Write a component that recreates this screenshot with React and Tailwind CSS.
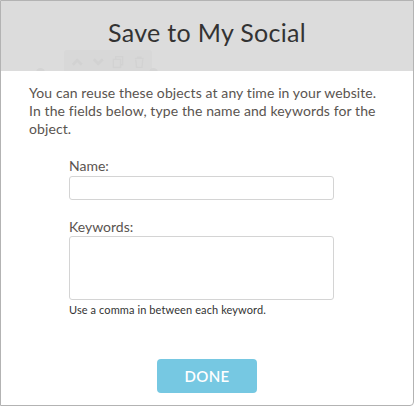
import React from "react";

function Toolbar() {
  return (
    <div className="absolute left-[63px] top-[49px] flex h-[24px] w-[88px] items-center gap-[8px] rounded-[3px] bg-[#d8d8d8] px-[7px]">
      <svg width="14" height="10" viewBox="0 0 14 10"><path d="M2 8 L7 3 L12 8" stroke="#d2d2d2" strokeWidth="3" fill="none" /></svg>
      <svg width="14" height="10" viewBox="0 0 14 10"><path d="M2 2 L7 7 L12 2" stroke="#d2d2d2" strokeWidth="3" fill="none" /></svg>
      <svg width="14" height="14" viewBox="0 0 14 14"><rect x="4" y="1" width="8" height="9" stroke="#d2d2d2" strokeWidth="1.5" fill="none" /><rect x="1.5" y="4" width="8" height="9" stroke="#d2d2d2" strokeWidth="1.5" fill="#d8d8d8" /></svg>
      <svg width="14" height="14" viewBox="0 0 14 14"><path d="M2 3 H12 M5 3 V1.5 H9 V3 M3 4 L4 13 H10 L11 4" stroke="#d2d2d2" strokeWidth="1.5" fill="none" /></svg>
    </div>
  );
}

export default function App() {
  return (
    <div className="relative flex h-[406px] w-[414px] flex-col overflow-hidden rounded-br-[4px] border border-[#b3b3b3] bg-white font-['Lato',sans-serif]">
      <div className="relative flex h-[70px] shrink-0 items-start justify-center overflow-hidden bg-[#dcdcdc]">
        <Toolbar />
        <div className="absolute left-[35px] top-[67px] h-[9px] w-[9px] rounded-full bg-[#d4d4d4]" />
        <div className="absolute left-[148px] top-[67px] h-[9px] w-[9px] rounded-full bg-[#d4d4d4]" />
        <h1 className="relative mt-[14px] text-[25px] leading-[34px] tracking-[0.3px] text-[#333333]">Save to My Social</h1>
      </div>
      <div className="px-[28px] pt-[13px] text-[14px] leading-[18px] tracking-[0.1px] text-[#5a5450]">
        You can reuse these objects at any time in your website. In the fields below, type the name and keywords for the object.
      </div>
      <div className="mt-[19px] flex flex-col pl-[68px] pr-[79px]">
        <label className="text-[14px] leading-[18px] text-[#5a5450]">Name:</label>
        <div className="mt-[1px] h-[24px] w-[265px] rounded-[3px] border border-[#d4d4d4] bg-white" />
        <label className="mt-[18px] text-[14px] leading-[18px] text-[#5a5450]">Keywords:</label>
        <div className="mt-[0px] h-[64px] w-[265px] rounded-[3px] border border-[#d4d4d4] bg-white" />
        <p className="mt-[3px] text-[11px] leading-[14px] tracking-[0.1px] text-[#333333]">Use a comma in between each keyword.</p>
      </div>
      <div className="mt-[42px] flex justify-center">
        <button className="h-[34px] w-[100px] rounded-[4px] bg-[#76c8e2] text-[15px] font-semibold tracking-[0.4px] text-white">DONE</button>
      </div>
    </div>
  );
}
